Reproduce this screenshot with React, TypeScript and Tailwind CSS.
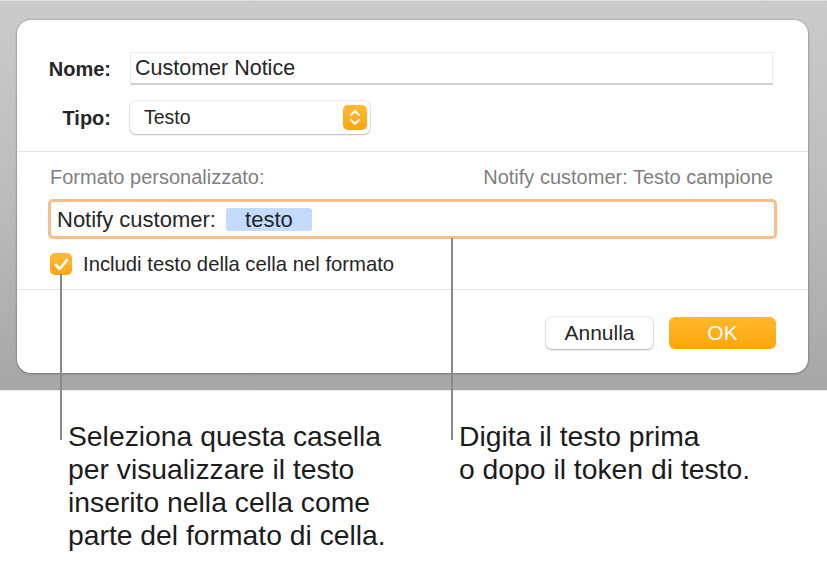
import React from "react";

const font = { fontFamily: '"Liberation Sans", Arial, sans-serif' };

export default function App() {
  return (
    <div className="relative w-[827px] h-[561px] bg-white overflow-hidden text-[#262626]" style={font}>
      {/* gray backdrop with dialog */}
      <div className="h-[391px] border-t border-[#dedede] bg-gradient-to-b from-[#cbcbcb] via-[#bcbcbc] to-[#a7a7a7] pt-[19px] pl-[17px] border-b border-b-[#e6e6e6]">
        <div className="w-[791px] h-[353px] bg-white rounded-[14px] shadow-[0_0_0_1px_rgba(0,0,0,0.08),0_1px_3px_rgba(0,0,0,0.25)] flex flex-col">
          {/* top section */}
          <div className="pt-[32px] pr-[35px] flex flex-col gap-[16px]">
            <div className="flex items-center h-[33px]">
              <div className="w-[94px] text-right font-bold text-[20px]">Nome:</div>
              <div className="ml-[19px] flex-1 h-[33px] border border-[#ececec] border-b-[#d2d2d2] border-b-2 flex items-center pl-[4px] text-[21.5px]">
                Customer Notice
              </div>
            </div>
            <div className="flex items-center h-[33px]">
              <div className="w-[94px] text-right font-bold text-[20px]">Tipo:</div>
              <div className="ml-[19px] w-[240px] h-[33px] rounded-[6px] shadow-[0_0_0_1px_rgba(0,0,0,0.07),0_1px_2px_rgba(0,0,0,0.22)] flex items-center justify-between pl-[14px] pr-[3px] text-[19.5px]">
                <span>Testo</span>
                <div className="w-[24px] h-[25px] rounded-[5px] bg-gradient-to-b from-[#ffb932] to-[#ffa507] flex items-center justify-center">
                  <svg width="12" height="17" viewBox="0 0 12 17" fill="none" stroke="white" strokeWidth="2" strokeLinecap="round" strokeLinejoin="round">
                    <path d="M2 6 L6 2 L10 6" />
                    <path d="M2 11 L6 15 L10 11" />
                  </svg>
                </div>
              </div>
            </div>
          </div>
          <div className="mt-[17px] h-px bg-[#e3e3e3]" />
          {/* custom format */}
          <div className="pl-[33px] pr-[35px] pt-[13px] flex items-center justify-between text-[20px] text-[#7f7f7f] h-[37px]">
            <span>Formato personalizzato:</span>
            <span>Notify customer: Testo campione</span>
          </div>
          <div className="ml-[31px] mr-[31px] mt-[10px] h-[40px] rounded-[5px] border-[3px] border-[#f8be89] flex items-center pl-[6px] text-[22px]">
            <span>Notify customer:</span>
            <span className="ml-[10px] w-[86px] h-[23px] rounded-[3px] bg-[#c2dbff] flex items-center justify-center">testo</span>
          </div>
          <div className="ml-[33px] mt-[14px] flex items-center h-[22px]">
            <div className="w-[22px] h-[22px] rounded-[5px] bg-gradient-to-b from-[#ffbb38] to-[#ffa60c] flex items-center justify-center">
              <svg width="15" height="13" viewBox="0 0 15 13" fill="none" stroke="white" strokeWidth="2.8" strokeLinecap="round" strokeLinejoin="round">
                <path d="M2 7 L5.8 11 L13 2" />
              </svg>
            </div>
            <span className="ml-[11px] text-[20.3px]">Includi testo della cella nel formato</span>
          </div>
          <div className="mt-[14px] h-px bg-[#e3e3e3]" />
          <div className="mt-[27px] pr-[32px] flex justify-end gap-[16px]">
            <div className="w-[107px] h-[32px] rounded-[6px] bg-white shadow-[0_0_0_1px_rgba(0,0,0,0.07),0_1px_2px_rgba(0,0,0,0.25)] flex items-center justify-center text-[21px]">
              Annulla
            </div>
            <div className="w-[107px] h-[32px] rounded-[6px] bg-gradient-to-b from-[#ffb82c] to-[#ffa503] flex items-center justify-center text-[21px] text-white">
              OK
            </div>
          </div>
        </div>
      </div>

      {/* callout lines */}
      <div className="absolute left-[60px] top-[274px] w-[2px] h-[166px] bg-[#8a8a8a]" />
      <div className="absolute left-[451px] top-[238px] w-[2px] h-[202px] bg-[#8a8a8a]" />

      {/* callout texts */}
      <div className="flex pt-[29px] text-[28.3px] leading-[33px] text-[#1c1c1c]">
        <div className="ml-[68px] w-[383px]">
          Seleziona questa casella
          <br />
          per visualizzare il testo
          <br />
          inserito nella cella come
          <br />
          parte del formato di cella.
        </div>
        <div className="ml-[8px]">
          Digita il testo prima
          <br />o dopo il token di testo.
        </div>
      </div>
    </div>
  );
}
